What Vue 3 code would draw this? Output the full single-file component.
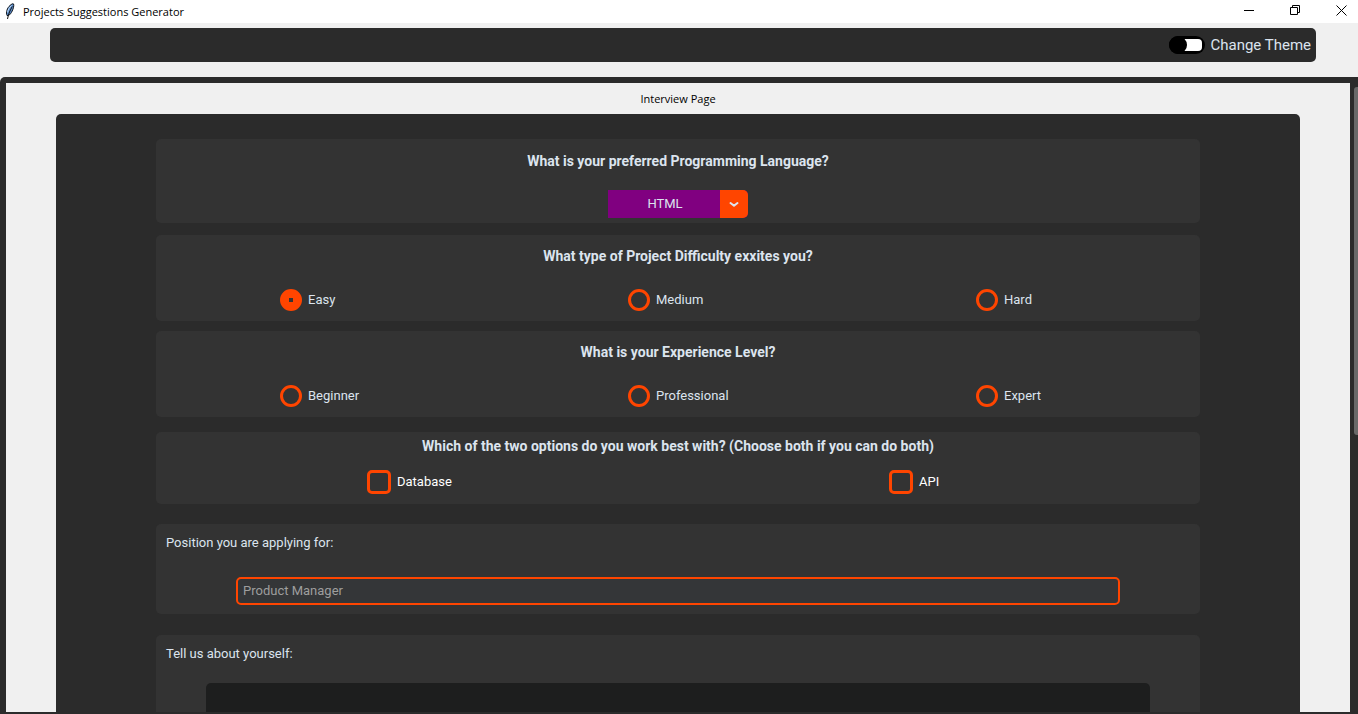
<script setup>
import { ref } from 'vue'

const dark = ref(false)
const language = ref('HTML')
const languages = ['HTML', 'CSS', 'JavaScript', 'Python', 'Java']

const radioQuestions = ref([
  {
    name: 'difficulty',
    title: 'What type of Project Difficulty exxites you?',
    options: ['Easy', 'Medium', 'Hard'],
    value: 'Easy',
  },
  {
    name: 'experience',
    title: 'What is your Experience Level?',
    options: ['Beginner', 'Professional', 'Expert'],
    value: '',
  },
])

const skills = ref([])
const position = ref('')
const about = ref('')
</script>

<template>
  <div class="window">
    <header class="titlebar">
      <svg class="feather" width="12" height="17" viewBox="0 0 12 17" aria-hidden="true">
        <path d="M3 12.500C1.800 9.500 3 5 6 2.500 7.500 1 9 .4 9.600 1c.5 1.800-.2 4.500-1.400 7-1 2-2.200 3.800-3.700 4.500z" fill="#5b8fd0" stroke="#10151c" stroke-width="1" />
        <path d="M7.500 2.500C5.200 4.500 3.900 7 3.600 9.500" fill="none" stroke="#c4dcf4" stroke-width="1" />
        <path d="M8.300 3.500C6.200 7 4.500 10.500 3.500 16" fill="none" stroke="#111" stroke-width="1" />
      </svg>
      <h1 class="app-name">Projects Suggestions Generator</h1>
      <button class="win-btn" type="button" aria-label="Minimize">
        <svg width="11" height="11" viewBox="0 0 11 11"><path d="M0 5.500h10" /></svg>
      </button>
      <button class="win-btn" type="button" aria-label="Restore">
        <svg width="11" height="11" viewBox="0 0 11 11"><path d="M.5 2.500h7v7h-7zM2.500 2.500v-2h7v7h-2" /></svg>
      </button>
      <button class="win-btn" type="button" aria-label="Close">
        <svg width="11" height="11" viewBox="0 0 11 11"><path d="M.5.5l10 10M10.500.5l-10 10" /></svg>
      </button>
    </header>

    <div class="toolbar">
      <label class="theme">
        <input v-model="dark" class="switch" type="checkbox" />
        <span>Change Theme</span>
      </label>
    </div>

    <div class="frame">
      <main class="page">
        <h2 class="page-title">Interview Page</h2>
        <form class="panel" @submit.prevent>
          <section class="card language">
            <label class="question" for="language">What is your preferred Programming Language?</label>
            <div class="dropdown">
              <select id="language" v-model="language">
                <option v-for="l in languages" :key="l">{{ l }}</option>
              </select>
              <span class="arrow">
                <svg width="12" height="8" viewBox="0 0 12 8" aria-hidden="true"><path d="M2.500 3L6 5.800 9.500 3" /></svg>
              </span>
            </div>
          </section>

          <fieldset v-for="q in radioQuestions" :key="q.name" class="card radios" :class="q.name">
            <legend class="question">{{ q.title }}</legend>
            <div class="options">
              <label v-for="o in q.options" :key="o" class="option">
                <input v-model="q.value" class="radio" type="radio" :name="q.name" :value="o" />
                <span>{{ o }}</span>
              </label>
            </div>
          </fieldset>

          <fieldset class="card skills">
            <legend class="question">Which of the two options do you work best with? (Choose both if you can do both)</legend>
            <div class="options">
              <label v-for="s in ['Database', 'API']" :key="s" class="option bright">
                <input v-model="skills" class="check" type="checkbox" :value="s" />
                <span>{{ s }}</span>
              </label>
            </div>
          </fieldset>

          <section class="card position">
            <label class="field-label" for="position">Position you are applying for:</label>
            <input id="position" v-model="position" class="entry" type="text" placeholder="Product Manager" />
          </section>

          <section class="card about">
            <label class="field-label" for="about">Tell us about yourself:</label>
            <textarea id="about" v-model="about" class="textbox"></textarea>
          </section>
        </form>
      </main>
      <div class="track"><div class="thumb"></div></div>
    </div>
  </div>
</template>

<style>
body {
  margin: 0;
  background: #f0f0f0;
}
</style>

<style scoped>
* {
  box-sizing: border-box;
}

.window {
  height: 100vh;
  display: flex;
  flex-direction: column;
  background: #f0f0f0;
  color: #dce4ee;
  font: 13px/16px Roboto, sans-serif;
  overflow: hidden;
}

.titlebar {
  flex: none;
  display: flex;
  align-items: center;
  height: 23px;
  padding-left: 4px;
  background: #fff;
  color: #000;
}

.feather {
  margin-right: 7px;
}

.app-name {
  flex: 1;
  margin: 0;
  font: 11px/16px "Open Sans", sans-serif;
}

.win-btn {
  display: grid;
  place-items: center;
  width: 34px;
  height: 20px;
  margin: 0 0 2px 12px;
  padding: 0;
  border: 0;
  background: none;
}

.win-btn svg {
  fill: none;
  stroke: #000;
  stroke-width: 1;
}

.toolbar {
  flex: none;
  display: flex;
  align-items: center;
  justify-content: flex-end;
  height: 34px;
  margin: 5px 42px 15px 50px;
  padding-right: 5px;
  border-radius: 5px;
  background: #2b2b2b;
}

.theme {
  display: flex;
  align-items: center;
  gap: 5px;
  font-size: 15px;
}

.switch {
  appearance: none;
  position: relative;
  display: flex;
  align-items: center;
  justify-content: flex-end;
  width: 36px;
  height: 18px;
  margin: 0;
  padding: 0 3px;
  border-radius: 9px;
  background: #000;
}

.switch::before {
  content: "";
  width: 18px;
  height: 12px;
  border-radius: 0 4px 4px 0;
  background: #fff;
}

.switch::after {
  content: "";
  position: absolute;
  top: 0;
  left: 0;
  width: 18px;
  height: 18px;
  border-radius: 50%;
  background: #000;
}

.switch:checked::after {
  left: 18px;
}

.frame {
  flex: 1;
  min-height: 0;
  display: flex;
  padding: 6px 0 2px 6px;
  border-radius: 5px 0 0 0;
  background: #2b2b2b;
}

.page {
  flex: 1;
  min-width: 0;
  padding: 8px 50px 0;
  background: #f0f0f0;
  overflow: hidden;
}

.page-title {
  margin: 0 0 7px;
  color: #000;
  font: 11px/16px "Open Sans", sans-serif;
  text-align: center;
}

.panel {
  padding: 25px 100px;
  border-radius: 5px;
  background: #2b2b2b;
}

.card {
  display: flex;
  flex-direction: column;
  min-width: 0;
  margin: 0;
  padding: 0;
  border: 0;
  border-radius: 5px;
  background: #333;
}

.question {
  display: block;
  width: 100%;
  padding: 0;
  font-weight: 700;
  font-size: 14px;
  text-align: center;
}

.language {
  padding: 14px 0 5px;
  gap: 21px;
  margin-bottom: 12px;
}

.dropdown {
  display: grid;
  grid-template-columns: 112px 28px;
  align-self: center;
  height: 28px;
}

.dropdown select {
  grid-area: 1 / 1 / 2 / 3;
  appearance: none;
  padding: 0 26px 0 0;
  border: 0;
  border-radius: 0 5px 5px 0;
  background: #800080;
  color: #dce4ee;
  font: inherit;
  text-align: center;
  text-align-last: center;
}

.arrow {
  grid-area: 1 / 2;
  display: grid;
  place-items: center;
  border-radius: 0 5px 5px 0;
  background: #ff4500;
  pointer-events: none;
}

.arrow path {
  fill: none;
  stroke: #dce4ee;
  stroke-width: 2;
  stroke-linecap: round;
  stroke-linejoin: round;
}

.radios {
  padding: 13px 0 9px;
  margin-bottom: 10px;
}

.radios .options {
  padding-top: 24px;
}

.radios.experience {
  margin-bottom: 15px;
}

.options {
  display: flex;
}

.question {
  float: left;
}

.option {
  flex: 1;
  display: grid;
  grid-template-columns: 24px 70px;
  gap: 6px;
  align-items: center;
  justify-content: center;
  justify-items: start;
  height: 24px;
}

.bright {
  color: #fff;
}

.radio {
  appearance: none;
  width: 22px;
  height: 22px;
  margin: 0;
  border: 3px solid #ff4500;
  border-radius: 50%;
}

.radios .option {
  grid-template-columns: 22px 72px;
}

.radio:checked {
  display: grid;
  place-items: center;
  background: #ff4500;
}

.radio:checked::before {
  content: "";
  width: 4px;
  height: 4px;
  background: #333;
}

.check {
  appearance: none;
  width: 24px;
  height: 24px;
  margin: 0;
  border: 3px solid #ff4500;
  border-radius: 5px;
}

.check:checked {
  background: #ff4500;
}

.skills {
  padding: 6px 0 10px;
  margin-bottom: 20px;
}

.skills .options {
  padding-top: 16px;
}

.position {
  padding: 11px 80px 9px;
  gap: 26px;
  margin-bottom: 21px;
}

.field-label {
  align-self: flex-start;
}

.position .field-label {
  margin-left: -70px;
}

.entry {
  width: 100%;
  height: 28px;
  padding: 0 5px 2px;
  border: 2px solid #ff4500;
  border-radius: 5px;
  background: #343638;
  color: #dce4ee;
  font: inherit;
}

.entry::placeholder {
  color: #9e9e9e;
  opacity: 1;
}

.about {
  padding: 11px 50px;
  gap: 21px;
}

.about .field-label {
  margin-left: -40px;
}

.textbox {
  width: 100%;
  height: 200px;
  padding: 6px;
  border: 0;
  border-radius: 5px;
  background: #1d1e1e;
  color: #dce4ee;
  font: inherit;
  resize: none;
}

.track {
  flex: none;
  width: 8px;
  padding: 4px 0 4px 4px;
}

.thumb {
  height: 56%;
  border-radius: 3px 0 0 3px;
  background: #696969;
}
</style>
